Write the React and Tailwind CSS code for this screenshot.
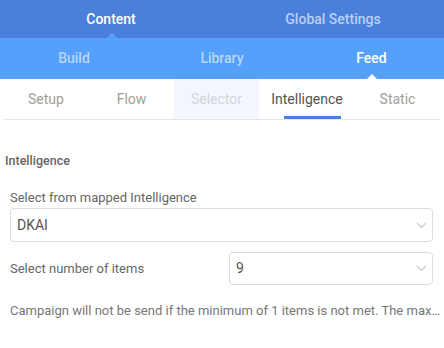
const font = { fontFamily: "Roboto, 'Liberation Sans', sans-serif" };

const Chevron = () => (
  <svg width="11" height="7" viewBox="0 0 11 7" fill="none" className="shrink-0">
    <path d="M1 1l4.5 4.5L10 1" stroke="#c4c9cf" strokeWidth="1.2" />
  </svg>
);

const subTabs = [
  { label: "Setup", w: "w-[86px]" },
  { label: "Flow", w: "w-[85px]" },
  { label: "Selector", w: "w-[85px]", disabled: true },
  { label: "Intelligence", w: "w-[96px]", active: true },
  { label: "Static", w: "w-[85px]" },
];

export default function App() {
  return (
    <div className="w-[444px] h-[348px] bg-white overflow-hidden" style={font}>
      {/* ── top tabs ─────────────────────────── */}
      <div className="flex h-[38px] bg-[#4a80dc] text-[14px] font-medium">
        <div className="relative flex w-1/2 items-center justify-center text-white">
          Content
          <span className="absolute bottom-0 left-[107px] h-0 w-0 border-x-[5px] border-b-[5px] border-x-transparent border-b-[#55a0fa]" />
        </div>
        <div className="flex w-1/2 items-center justify-center text-[#b9cff4]">
          Global Settings
        </div>
      </div>

      <div className="flex h-[41px] bg-[#55a0fa] text-[14px] font-medium">
        <div className="flex w-1/3 items-center justify-center text-[#b7d6fb]">Build</div>
        <div className="flex w-1/3 items-center justify-center text-[#b7d6fb]">Library</div>
        <div className="relative flex w-1/3 items-center justify-center pl-[3px] text-white">
          Feed
          <span className="absolute bottom-0 left-[71px] h-0 w-0 border-x-[5px] border-b-[5px] border-x-transparent border-b-white" />
        </div>
      </div>

      {/* ── sub tabs ─────────────────────────── */}
      <div className="ml-[3px] flex h-[41px] w-[437px] border-b border-[#e6e6e6] text-[14px]">
        {subTabs.map((t) => (
          <div
            key={t.label}
            className={`relative flex items-center justify-center ${t.w} ${
              t.disabled
                ? "bg-[#f3f7fd] text-[#d2d6db]"
                : t.active
                  ? "text-[#555]"
                  : "text-[#9e9e9e]"
            }`}
          >
            {t.label}
            {t.active && (
              <span className="absolute bottom-0 left-[25px] h-[3px] w-[57px] bg-[#4a80dc]" />
            )}
          </div>
        ))}
      </div>

      {/* ── body ─────────────────────────────── */}
      <div className="pt-[33px]">
        <p className="pl-[5px] text-[12.5px] font-medium leading-[16px] text-[#666]">
          Intelligence
        </p>

        <p className="mt-[21px] pl-[10px] text-[13px] leading-[16px] text-[#666]">
          Select from mapped Intelligence
        </p>
        <div className="ml-[10px] mt-[2px] flex h-[34px] w-[423px] items-center justify-between rounded-[4px] border border-[#dcdcdc] pl-[6px] pr-[5px] text-[14px] text-[#555]">
          <span>DKAI</span>
          <Chevron />
        </div>

        <div className="mt-[10px] flex items-center">
          <span className="w-[229px] pl-[10px] text-[13px] text-[#666]">Select number of items</span>
          <div className="flex h-[33px] w-[204px] items-center justify-between rounded-[4px] border border-[#dcdcdc] pl-[6px] pr-[5px] text-[14px] text-[#555]">
            <span>9</span>
            <Chevron />
          </div>
        </div>

        <p className="mt-[18px] w-[441px] truncate pl-[10px] text-[13px] leading-[16px] text-[#777]">
          Campaign will not be send if the minimum of 1 items is not met. The maximum number of items is 9.
        </p>
      </div>
    </div>
  );
}
